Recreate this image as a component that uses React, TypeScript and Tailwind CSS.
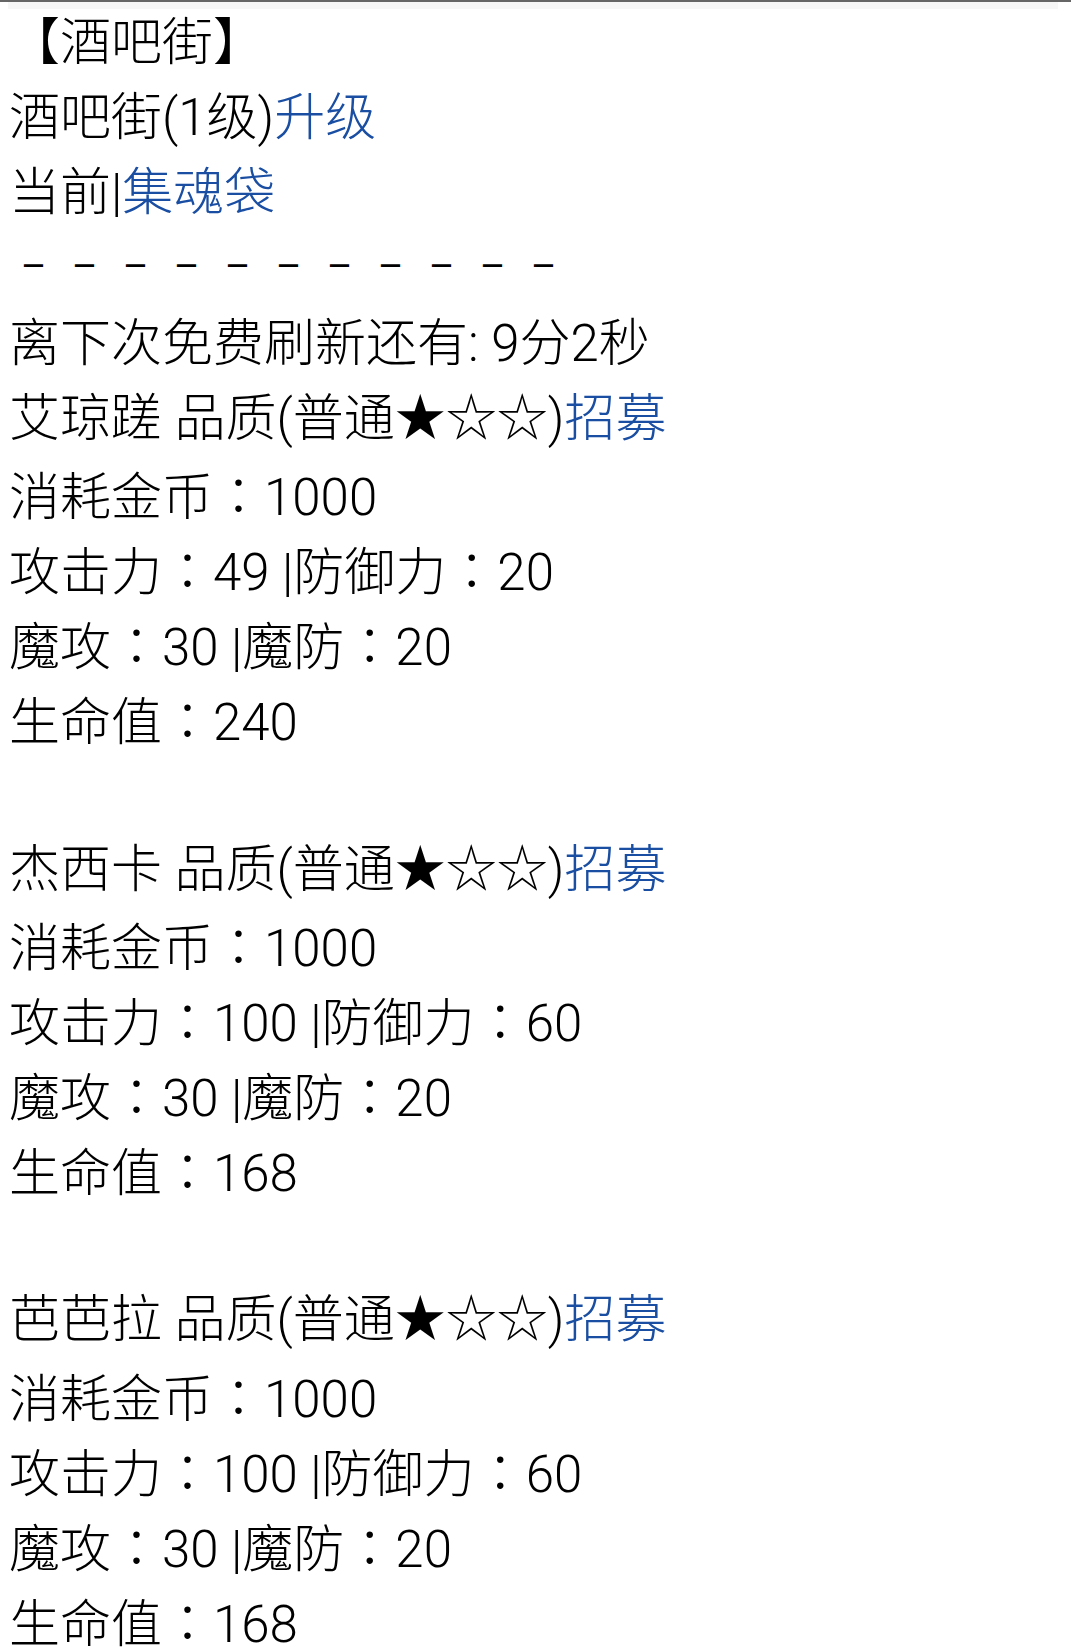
import React from 'react';

type Hero = {
  name: string;
  cost: number;
  atk: number;
  def: number;
  matk: number;
  mdef: number;
  hp: number;
};

const heroes: Hero[] = [
  { name: '艾琼蹉', cost: 1000, atk: 49, def: 20, matk: 30, mdef: 20, hp: 240 },
  { name: '杰西卡', cost: 1000, atk: 100, def: 60, matk: 30, mdef: 20, hp: 168 },
  { name: '芭芭拉', cost: 1000, atk: 100, def: 60, matk: 30, mdef: 20, hp: 168 },
];

const Link: React.FC<{ children: React.ReactNode }> = ({ children }) => (
  <a href="#" className="text-[#1a4ea2] no-underline">
    {children}
  </a>
);

// every row is one fixed-height line, so mixed fonts don't push rows apart
const Line: React.FC<{ children?: React.ReactNode; className?: string }> = ({ children, className = '' }) => (
  <div className={`h-[75.15px] whitespace-nowrap ${className}`}>{children}</div>
);

// full-width colon, centred in its box
const Colon = () => <span className="font-['Noto_Sans_CJK_TC',sans-serif]">：</span>;

const HeroBlock: React.FC<{ hero: Hero }> = ({ hero }) => (
  <>
    <Line>
      {hero.name} 品质(普通★☆☆)<Link>招募</Link>
    </Line>
    <Line>
      消耗金币<Colon />
      {hero.cost}
    </Line>
    <Line>
      攻击力<Colon />
      {hero.atk} |防御力<Colon />
      {hero.def}
    </Line>
    <Line>
      魔攻<Colon />
      {hero.matk} |魔防<Colon />
      {hero.mdef}
    </Line>
    <Line>
      生命值<Colon />
      {hero.hp}
    </Line>
  </>
);

export default function App() {
  return (
    <div className="relative min-h-screen bg-white border-t-2 border-[#666666] overflow-hidden">
      {/* thin grey strip under the top edge */}
      <div className="absolute left-2 right-[13px] top-0 h-[7px] bg-[#f7f7f7]" />

      <div className="pt-[3px] pl-[9px] text-[51px] leading-[75px] text-black font-light font-['Roboto','Noto_Sans_CJK_SC',sans-serif]">
        <Line>【酒吧街】</Line>
        <Line>
          酒吧街(1级)<Link>升级</Link>
        </Line>
        <Line>
          当前|<Link>集魂袋</Link>
        </Line>
        <Line className="pl-[11px] text-[27px] font-bold tracking-[24px]">－－－－－－－－－－－</Line>
        <Line>离下次免费刷新还有: 9分2秒</Line>

        {heroes.map((h, i) => (
          <React.Fragment key={i}>
            {i > 0 && <Line />}
            <HeroBlock hero={h} />
          </React.Fragment>
        ))}
      </div>
    </div>
  );
}
